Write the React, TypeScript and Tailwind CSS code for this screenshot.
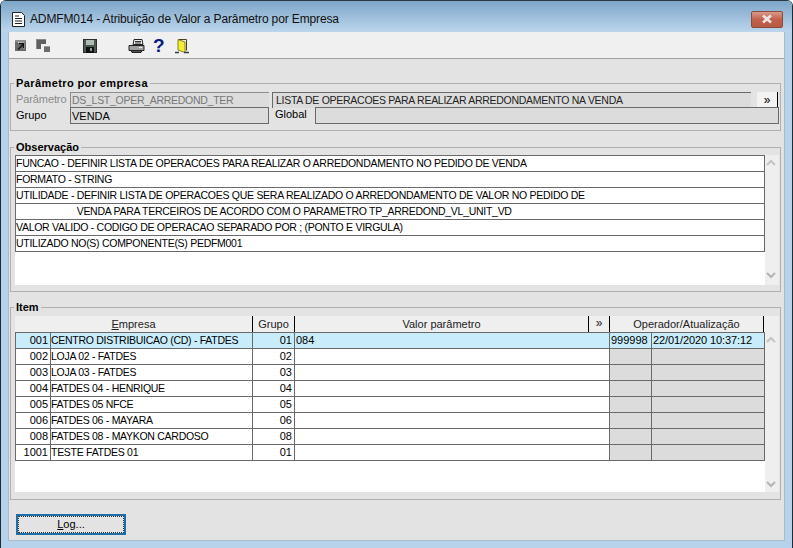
const FONT = "font-['Liberation_Sans',Arial,sans-serif]";
// caps in the original font are narrower than Arial's
const CAPS = "text-[10.5px] tracking-[-0.28px] whitespace-pre";

const obsRows = [
  "FUNCAO - DEFINIR LISTA DE OPERACOES PARA REALIZAR O ARREDONDAMENTO NO PEDIDO DE VENDA",
  "FORMATO - STRING",
  "UTILIDADE - DEFINIR LISTA DE OPERACOES QUE SERA REALIZADO O ARREDONDAMENTO DE VALOR NO PEDIDO DE",
  "                       VENDA PARA TERCEIROS DE ACORDO COM O PARAMETRO TP_ARREDOND_VL_UNIT_VD",
  "VALOR VALIDO - CODIGO DE OPERACAO SEPARADO POR ; (PONTO E VIRGULA)",
  "UTILIZADO NO(S) COMPONENTE(S) PEDFM001",
];

const items = [
  { id: "001", nome: "CENTRO DISTRIBUICAO (CD) - FATDES", grupo: "01", valor: "084", op: "999998", data: "22/01/2020 10:37:12" },
  { id: "002", nome: "LOJA 02 - FATDES", grupo: "02" },
  { id: "003", nome: "LOJA 03 - FATDES", grupo: "03" },
  { id: "004", nome: "FATDES 04 - HENRIQUE", grupo: "04" },
  { id: "005", nome: "FATDES 05 NFCE", grupo: "05" },
  { id: "006", nome: "FATDES 06 - MAYARA", grupo: "06" },
  { id: "008", nome: "FATDES 08 - MAYKON CARDOSO", grupo: "08" },
  { id: "1001", nome: "TESTE FATDES 01", grupo: "01" },
];

const Legend = ({ text, wide }: { text: string; wide?: boolean }) => (
  <span className={`absolute left-[3px] top-[-8px] bg-[#e3e3e3] px-[2px] text-[11px] leading-[14px] font-bold whitespace-nowrap text-black ${wide ? "tracking-[0.4px]" : ""}`}>
    {text}
  </span>
);

const ScrollArrows = ({ className }: { className: string }) => (
  <div className={`flex w-[14px] flex-col justify-between bg-[#efefef] ${className}`}>
    <svg width="14" height="10" viewBox="0 0 14 10"><path d="M2 7l4-4 4 4" fill="none" stroke="#c4c4c4" strokeWidth="2" /></svg>
    <svg width="14" height="10" viewBox="0 0 14 10"><path d="M2 3l4 4 4-4" fill="none" stroke="#b4b4b4" strokeWidth="2" /></svg>
  </div>
);

const ToolIcons = () => (
  <div className="flex h-[26px] items-center pt-[2px]">
    <svg className="ml-[6px]" width="12" height="12" viewBox="0 0 12 12">
      <rect x="0" y="0" width="11" height="11" fill="#6a6a6a" />
      <rect x="0" y="0" width="11" height="2" fill="#8c8c8c" />
      <path d="M3 2.5h6v6" fill="none" stroke="#e4e4e4" strokeWidth="1" />
      <path d="M3 9.5L8.5 4M4 3.5h4.5V8" fill="none" stroke="#111" strokeWidth="1.4" />
    </svg>
    <svg className="ml-[9px]" width="15" height="15" viewBox="0 0 15 15">
      <path d="M0 0h10v5H5v5H0z" fill="#5f5f5f" />
      <path d="M0 0h10v1H1v9H0z" fill="#8a8a8a" />
      <rect x="8" y="7" width="6" height="6" fill="#6c6c6c" />
      <rect x="8" y="7" width="6" height="1" fill="#9a9a9a" />
    </svg>
    <svg className="ml-[32px]" width="15" height="15" viewBox="0 0 15 15">
      <rect x="0.5" y="0.5" width="13" height="13" fill="#4a5a50" stroke="#2a302c" />
      <rect x="3" y="1" width="8" height="5" fill="#aebab2" />
      <rect x="3" y="8" width="8" height="6" fill="#111" />
      <rect x="7" y="9" width="2" height="3" fill="#9a9a9a" />
    </svg>
    <svg className="ml-[30px]" width="17" height="15" viewBox="0 0 17 15">
      <path d="M6 0.5h8l1 5H5z" fill="#f0f0f0" stroke="#222" />
      <path d="M7 2.5h6M7 4h6" stroke="#333" />
      <path d="M1 6.5h15v5H1z" fill="#a0a0a0" stroke="#222" />
      <path d="M3 11.5h11l-1 2H4z" fill="#555" stroke="#222" />
      <rect x="11" y="8" width="3" height="1" fill="#eee" />
    </svg>
    <span className="ml-[8px] w-[11px] text-center text-[19px] leading-[16px] font-bold text-[#0a1a80]">?</span>
    <svg className="ml-[11px]" width="14" height="15" viewBox="0 0 14 15">
      <path d="M3.5 0.5h8v11" fill="none" stroke="#4a3c18" />
      <path d="M3 0.5l7 2.5v10.5L3 11z" fill="#f7ee30" stroke="#6a6420" strokeWidth="0.8" />
      <path d="M0 13.5h4M9 13.5h5" stroke="#3a3a3a" strokeWidth="1.3" />
    </svg>
  </div>
);

export default function App() {
  return (
    <div className={`${FONT} flex h-[548px] w-[793px] flex-col overflow-hidden rounded-t-[6px] border-x border-[#1c2c34] bg-[#b7d3ec] text-[11px] leading-[15px] text-black`}>
      <div className="flex h-[32px] shrink-0 items-center border-t border-[#2a3a44] bg-gradient-to-b from-[#7ea6c8] to-[#bcd6ec] pt-[5px] pl-[10px]">
        <svg width="15" height="17" viewBox="0 0 15 17">
          <path d="M1.5 1.5h9l3 3v11h-12z" fill="#fff" stroke="#222" />
          <path d="M4 5h4M4 7.5h7M4 10h7M4 12.5h7" stroke="#222" />
        </svg>
        <span className="ml-[4px] text-[12px] tracking-[-0.13px] text-[#111]">ADMFM014 - Atribuição de Valor a Parâmetro por Empresa</span>
        <div className="mr-[9px] ml-auto flex h-[17px] w-[32px] items-center justify-center rounded-[2px] border border-[#8a4a3c] bg-gradient-to-b from-[#d99a8c] via-[#c2604c] to-[#b85a44]">
          <svg width="12" height="10" viewBox="0 0 12 10"><path d="M2 1.5l8 7M10 1.5l-8 7" stroke="#eee6e2" strokeWidth="2.6" /></svg>
        </div>
      </div>

      <div className="mx-[7px] mb-[7px] flex flex-1 flex-col overflow-hidden border-x border-b border-[#a9bccb] bg-[#e3e3e3]">
        <div className="shrink-0 border-b border-[#a0a0a0] bg-[#f0f0f0]">
          <ToolIcons />
        </div>

        {/* Parâmetro por empresa */}
        <div className="relative mt-[24px] ml-[1px] h-[48px] w-[771px] shrink-0 border border-[#b0b0b0]">
          <Legend text="Parâmetro por empresa" wide />
          <div className="mt-[8px] flex h-[15px]">
            <span className="w-[59px] pl-[5px] tracking-[-0.1px] text-[#8a8a8a]">Parâmetro</span>
            <div className={`h-[16px] w-[199px] border-t border-l border-[#8c8c8c] bg-[#dcdcdc] pl-px text-[#777] ${CAPS}`}>DS_LST_OPER_ARREDOND_TER</div>
            <div className={`ml-[3px] h-[16px] w-[479px] border-t border-l border-[#6a6a6a] bg-[#dcdcdc] pl-[3px] text-[#222] ${CAPS}`}>LISTA DE OPERACOES PARA REALIZAR ARREDONDAMENTO NA VENDA</div>
            <div className="ml-[6px] flex h-[15px] w-[21px] items-center justify-center border-r border-black bg-[#f3f3f3] text-[12px] leading-[14px]">»</div>
          </div>
          <div className="flex h-[17px] leading-[16px]">
            <span className="w-[59px] pl-[5px]">Grupo</span>
            <div className="h-[17px] w-[199px] border border-[#6a6a6a] bg-[#dcdcdc] pl-px">VENDA</div>
            <span className="w-[46px] pl-[6px] leading-[14px]">Global</span>
            <div className="h-[17px] w-[464px] border border-[#6a6a6a] bg-[#dcdcdc]" />
          </div>
        </div>

        {/* Observação */}
        <div className="relative mt-[16px] ml-[1px] flex h-[145px] w-[771px] shrink-0 border border-[#b0b0b0] pt-[7px] pl-[4px]">
          <Legend text="Observação" />
          <div className="h-[130px] w-[750px] bg-white">
            <div className="border border-b-0 border-[#6a6a6a]">
              {obsRows.map((row, i) => (
                <div key={i} className={`h-[16px] border-b border-[#6a6a6a] leading-[15px] ${CAPS}`}>
                  {row}
                </div>
              ))}
            </div>
          </div>
          <ScrollArrows className="h-[130px] pt-[3px] pb-[5px]" />
        </div>

        {/* Item */}
        <div className="relative mt-[15px] ml-[1px] flex h-[193px] w-[771px] shrink-0 border border-[#b0b0b0] pt-[8px] pl-[4px]">
          <Legend text="Item" />
          <div className="h-[176px] w-[750px] bg-white">
            <div className="flex h-[16px] bg-[#efefef] text-center leading-[16px] text-[#222]">
              <div className="w-[238px] border-r border-black"><u>E</u>mpresa</div>
              <div className="w-[42px] border-r border-black">Grupo</div>
              <div className="w-[294px] border-r border-black">Valor parâmetro</div>
              <div className="w-[21px] border-r border-black text-[12px] leading-[14px]">»</div>
              <div className="w-[154px] border-r border-black">Operador/Atualização</div>
            </div>
            <div className="border-t border-l border-[#6a6a6a]">
              {items.map((item, i) => (
                <div key={item.id} className={`flex h-[16px] border-b border-[#6a6a6a] leading-[14px] ${i === 0 ? "bg-[#c9ecfb]" : "bg-white"}`}>
                  <div className="w-[35px] border-r border-[#6a6a6a] pr-[2px] text-right">{item.id}</div>
                  <div className={`w-[202px] border-r border-[#6a6a6a] ${CAPS}`}>{item.nome}</div>
                  <div className="w-[42px] border-r border-[#6a6a6a] pr-[2px] text-right">{item.grupo}</div>
                  <div className="w-[315px] border-r border-[#6a6a6a] pl-px">{item.valor}</div>
                  <div className={`w-[42px] border-r border-[#6a6a6a] pl-px ${item.op ? "" : "bg-[#dcdcdc]"}`}>{item.op}</div>
                  <div className={`w-[113px] border-r border-[#6a6a6a] pl-px tracking-[-0.1px] ${item.data ? "" : "bg-[#dcdcdc]"}`}>{item.data}</div>
                </div>
              ))}
            </div>
          </div>
          <ScrollArrows className="h-[176px] pt-[19px] pb-[3px]" />
        </div>

        <button className="mt-[14px] ml-[7px] h-[21px] w-[110px] shrink-0 border-2 border-[#1f6ea8] bg-[#e3e3e3] text-[11px] leading-[15px] outline-1 outline-offset-[-3px] outline-dotted outline-[#333]">
          <u>L</u>og...
        </button>
      </div>
    </div>
  );
}
